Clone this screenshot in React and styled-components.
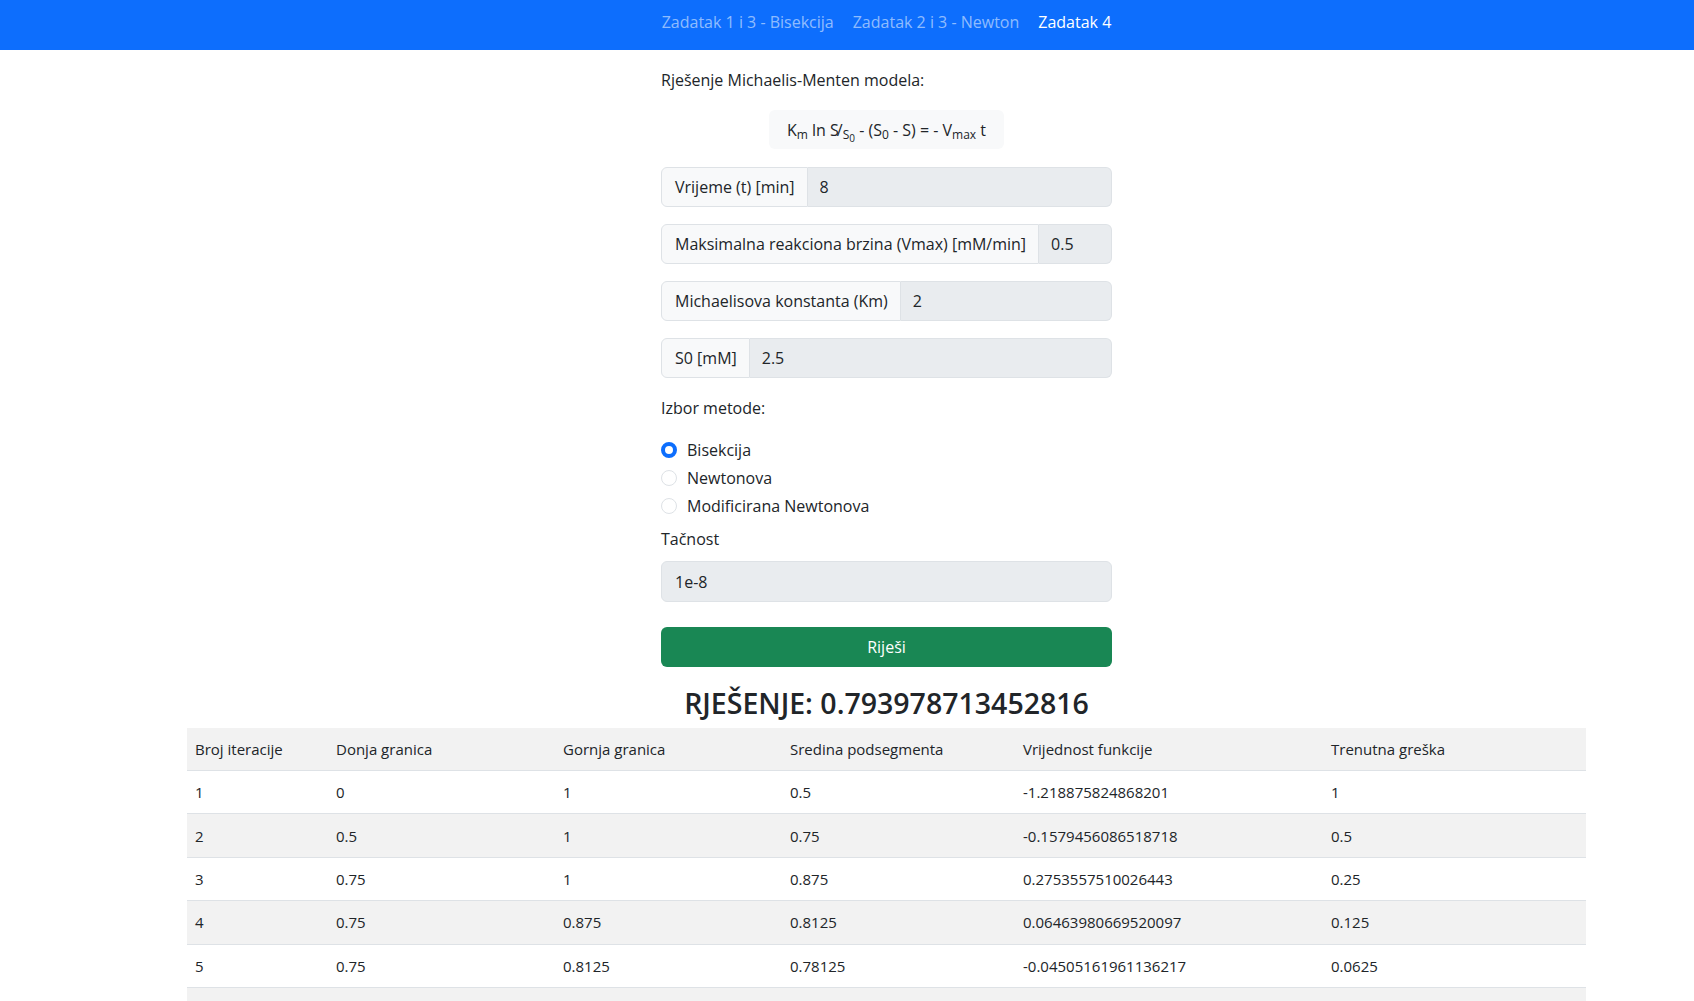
import React from 'react'
import styled, { createGlobalStyle } from 'styled-components'

const GlobalStyle = createGlobalStyle`
  * { box-sizing: border-box; }
  body {
    margin: 0;
    font-family: "Open Sans", "Noto Sans", sans-serif;
    font-size: 16px;
    line-height: 1.5;
    color: #212529;
    background: #fff;
  }
`

const links = [
  { label: 'Zadatak 1 i 3 - Bisekcija' },
  { label: 'Zadatak 2 i 3 - Newton' },
  { label: 'Zadatak 4', active: true },
]

const fields = [
  { label: 'Vrijeme (t) [min]', value: '8' },
  { label: 'Maksimalna reakciona brzina (Vmax) [mM/min]', value: '0.5' },
  { label: 'Michaelisova konstanta (Km)', value: '2' },
  { label: 'S0 [mM]', value: '2.5' },
]

const methods = [
  { label: 'Bisekcija', checked: true },
  { label: 'Newtonova' },
  { label: 'Modificirana Newtonova' },
]

const columns = [
  { title: 'Broj iteracije', width: 141 },
  { title: 'Donja granica', width: 227 },
  { title: 'Gornja granica', width: 227 },
  { title: 'Sredina podsegmenta', width: 233 },
  { title: 'Vrijednost funkcije', width: 308 },
  { title: 'Trenutna greška', width: 263 },
]

const rows = [
  ['1', '0', '1', '0.5', '-1.218875824868201', '1'],
  ['2', '0.5', '1', '0.75', '-0.1579456086518718', '0.5'],
  ['3', '0.75', '1', '0.875', '0.2753557510026443', '0.25'],
  ['4', '0.75', '0.875', '0.8125', '0.06463980669520097', '0.125'],
  ['5', '0.75', '0.8125', '0.78125', '-0.04505161961136217', '0.0625'],
  ['6', '0.78125', '0.8125', '0.796875', '0.010178604541412427', '0.03125'],
]

const App = () => {
  return (
    <>
      <GlobalStyle />

      <Navbar>
        <Nav>
          {links.map((l) => (
            <NavLink key={l.label} $active={l.active}>{l.label}</NavLink>
          ))}
        </Nav>
      </Navbar>

      <Page>
        <Form>
          <Intro>Rješenje Michaelis-Menten modela:</Intro>

          <Formula>
            K<Sub>m</Sub> ln S<Slash>/</Slash><Sub>S<SubSub>0</SubSub></Sub> - (S<Sub>0</Sub> - S) = - V<Sub>max</Sub> t
          </Formula>

          <Groups>
            {fields.map((f) => (
              <InputGroup key={f.label}>
                <GroupLabel>{f.label}</GroupLabel>
                <GroupInput readOnly value={f.value} />
              </InputGroup>
            ))}
          </Groups>

          <SectionLabel>Izbor metode:</SectionLabel>

          <Radios>
            {methods.map((m) => (
              <RadioRow key={m.label}>
                <Radio $checked={m.checked} />
                <span>{m.label}</span>
              </RadioRow>
            ))}
          </Radios>

          <FieldLabel>Tačnost</FieldLabel>
          <Input readOnly value="1e-8" />

          <SolveButton>Riješi</SolveButton>
        </Form>

        <Result>RJEŠENJE: 0.793978713452816</Result>

        <Table>
          <colgroup>
            {columns.map((c) => (
              <col key={c.title} style={{ width: c.width }} />
            ))}
          </colgroup>
          <tbody>
            <Row $striped>
              {columns.map((c) => (
                <HeadCell key={c.title}>{c.title}</HeadCell>
              ))}
            </Row>
            {rows.map((r, i) => (
              <Row key={r[0]} $striped={i % 2 === 1}>
                {r.map((v, j) => (
                  <Cell key={j}>{v}</Cell>
                ))}
              </Row>
            ))}
          </tbody>
        </Table>
      </Page>
    </>
  )
}

export default App

const Navbar = styled.nav`
  height: 50px;
  background: #0d6efd;
  display: flex;
  align-items: center;
  justify-content: center;
  padding-left: 79px;
`

const Nav = styled.div`
  display: flex;
  gap: 19px;
  margin-top: -6px;
`

const NavLink = styled.a`
  font-size: 16px;
  color: ${(p) => (p.$active ? '#fff' : 'rgba(255,255,255,0.55)')};
  cursor: pointer;
  white-space: nowrap;
`

const Page = styled.main`
  display: flex;
  flex-direction: column;
  align-items: center;
  padding-left: 79px;
`

const Form = styled.div`
  width: 451px;
  display: flex;
  flex-direction: column;
`

const Intro = styled.p`
  margin: 18px 0 0;
  line-height: 24px;
`

const Formula = styled.div`
  align-self: center;
  margin-top: 18px;
  height: 39px;
  padding: 8px 18px 0;
  line-height: 24px;
  background: #f8f9fa;
  border-radius: 6px;
  font-size: 16px;
  white-space: pre;
`

const Sub = styled.sub`
  font-size: 12px;
  line-height: 0;
  vertical-align: -3px;
`

const SubSub = styled.span`
  font-size: 10px;
  line-height: 0;
  vertical-align: -3px;
`

const Slash = styled.span`
  margin-left: -2px;
`

const Groups = styled.div`
  display: flex;
  flex-direction: column;
  gap: 17px;
  margin-top: 18px;
`

const InputGroup = styled.div`
  display: flex;
  height: 40px;
`

const GroupLabel = styled.span`
  display: flex;
  align-items: center;
  padding: 0 12px 0 13px;
  background: #f8f9fa;
  border: 1px solid #dee2e6;
  border-radius: 6px 0 0 6px;
  white-space: nowrap;
`

const GroupInput = styled.input`
  flex: 1;
  min-width: 0;
  padding: 0 12px;
  font: inherit;
  color: #212529;
  background: #e9ecef;
  border: 1px solid #dee2e6;
  border-left: none;
  border-radius: 0 6px 6px 0;
  outline: none;
`

const SectionLabel = styled.p`
  margin: 18px 0 0;
  line-height: 24px;
`

const Radios = styled.div`
  display: flex;
  flex-direction: column;
  gap: 4px;
  margin-top: 18px;
`

const RadioRow = styled.label`
  display: flex;
  align-items: center;
  gap: 10px;
  line-height: 24px;
`

const Radio = styled.span`
  width: 16px;
  height: 16px;
  border-radius: 50%;
  flex-shrink: 0;
  background: #fff;
  border: ${(p) => (p.$checked ? '4.5px solid #0d6efd' : '1px solid #dee2e6')};
`

const FieldLabel = styled.p`
  margin: 9px 0 0;
  line-height: 24px;
`

const Input = styled.input`
  margin-top: 10px;
  height: 41px;
  padding: 0 13px;
  font: inherit;
  color: #212529;
  background: #e9ecef;
  border: 1px solid #dee2e6;
  border-radius: 6px;
  outline: none;
`

const SolveButton = styled.button`
  margin-top: 25px;
  height: 40px;
  font: inherit;
  color: #fff;
  background: #198754;
  border: none;
  border-radius: 6px;
  cursor: pointer;
`

const Result = styled.h2`
  margin: 19px 0 0;
  font-size: 28.5px;
  font-weight: 600;
  line-height: 34px;
  color: #212529;
`

const Table = styled.table`
  width: 1399px;
  margin-top: 8px;
  border-collapse: collapse;
  table-layout: fixed;
  font-size: 15px;
`

const Row = styled.tr`
  background: ${(p) => (p.$striped ? '#f2f2f2' : '#fff')};
  border-bottom: 1px solid #dee2e6;
`

const HeadCell = styled.td`
  padding: 9px 8px;
  height: 42px;
  line-height: 24px;
  text-align: left;
  font-weight: 400;
`

const Cell = styled.td`
  padding: 9px 8px;
  height: 43.4px;
  line-height: 24px;
`
